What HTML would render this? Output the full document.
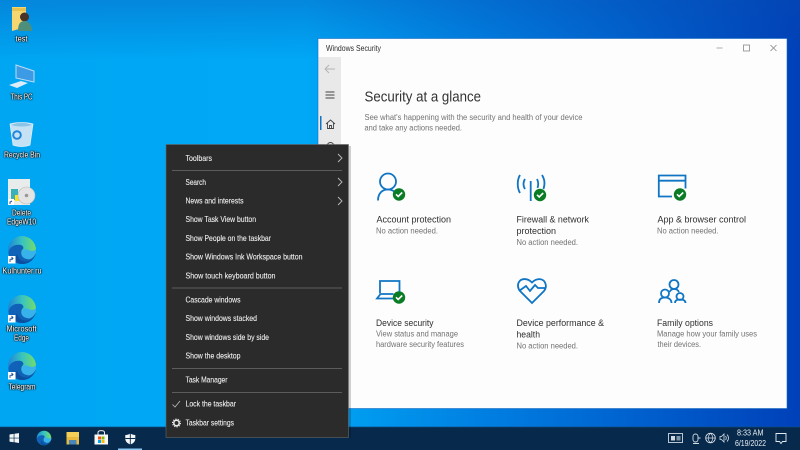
<!DOCTYPE html>
<html><head><meta charset="utf-8"><style>
html,body{margin:0;padding:0;width:800px;height:450px;overflow:hidden;background:#0070d8}
svg{display:block;filter:blur(.25px)}
text{font-family:"Liberation Sans",sans-serif}
.m text{font-size:8px;fill:#f2f2f2;stroke:#f2f2f2;stroke-width:.08}
.d text{font-size:8px;fill:#fff;text-anchor:middle}
.d{filter:drop-shadow(0 0 .7px #000) drop-shadow(0 0 .5px #000)}
.t{font-size:9px;fill:#2e2e2e}
.s{font-size:8px;fill:#727272}
.i{fill:none;stroke:#0f75c4;stroke-width:1.8}
</style></head><body>
<svg width="800" height="450" viewBox="0 0 800 450" xmlns="http://www.w3.org/2000/svg">
<defs>
<linearGradient id="bg" x1="0" y1="0" x2="1" y2="0"><stop offset="0" stop-color="#00a6f2"/><stop offset=".38" stop-color="#00a8f6"/><stop offset=".6" stop-color="#0080e2"/><stop offset="1" stop-color="#0040b8"/></linearGradient>
<linearGradient id="tp" x1="0" y1="0" x2="0" y2="1"><stop offset="0" stop-color="#0a4cb0" stop-opacity=".35"/><stop offset="1" stop-color="#0a4cb0" stop-opacity="0"/></linearGradient>
<linearGradient id="eg" x1="0" y1="0" x2="1" y2="0"><stop offset="0" stop-color="#1c86d8"/><stop offset=".5" stop-color="#38c4c0"/><stop offset="1" stop-color="#74dc6a"/></linearGradient>
<g id="edgeb"><circle cx="14" cy="14" r="14" fill="url(#eg)"/>
<path d="M.5 16C2 10 8 8 13 9c3 1 3 4 1 5-2 4 0 8 5 9 4 1 7-2 9-6-2 7-7 11-14 11C6 28 0 22 .5 16z" fill="#0f62b8"/>
<path d="M15 14c3-2 7 1 9 1 2 0 3-1 4-2v4c-2 4-5 7-9 6-5-1-7-5-4-9z" fill="#38b2ea"/>
<path d="M9 18c1 5 5 8 10 7.500 4-.5 7-4 9-8.500-2 7-7 11-14 11-2 0-4-.5-5.500-2C7 23 8 20 9 18z" fill="#0c4f9e"/></g>
<g id="edge"><use href="#edgeb"/><rect x="0" y="20" width="7.500" height="7.500" fill="#fff"/><path d="M2 26v-2.500l2.500-1M3.500 21l1.500 1.500-1.500 1.500" stroke="#1a4fa0" stroke-width=".9" fill="none"/></g>
<g id="ck"><circle r="6.200" fill="#0a7c25"/><path d="M-3-.2l2.200 2.200 4-4" stroke="#fff" stroke-width="1.600" fill="none"/></g>
</defs>

<rect width="800" height="450" fill="url(#bg)"/>
<rect width="800" height="60" fill="url(#tp)"/>

<!-- desktop icons -->
<g>
<path d="M12 7h14v20l-14 4z" fill="#f5d670"/><path d="M12 8h14v3H12z" fill="#e8c24e"/>
<circle cx="24.500" cy="17" r="4.500" fill="#4a3428"/><path d="M18 31c0-8 3-10 6.500-10S32 24 32 31z" fill="#4d8f7a"/>
<path d="M16 65l18 6v11l-18-4z" fill="#3d9be6" stroke="#bcdcf4" stroke-width="1"/><path d="M9 85l12-4 7 2-11 5z" fill="#dcecf8"/>
<path d="M10 124c7-2 16-2 23 0l-3 21c-5 2-12 2-17 0z" fill="#c4e2f4" stroke="#e4f2fa" stroke-width=".7"/><path d="M11 125c6 2 15 2 21 0-6-3-15-3-21 0z" fill="#8cc4e8"/><circle cx="17" cy="135" r="3.800" fill="none" stroke="#1f86dc" stroke-width="2"/>
<rect x="8" y="179" width="22" height="26" fill="#e8eceb"/><rect x="11" y="189" width="7" height="11" fill="#3bb0b8"/><rect x="15" y="195" width="4" height="6" fill="#ffe020"/><circle cx="26.500" cy="195.500" r="8.500" fill="#e4e4e4" stroke="#bbb" stroke-width=".6"/><circle cx="26.500" cy="195.500" r="1.800" fill="#999"/><rect x="8" y="199" width="6" height="6" fill="#fff"/><path d="M10 204v-2l2-1" stroke="#1a4fa0" fill="none"/>
<use href="#edge" x="8" y="236"/><use href="#edge" x="8" y="295"/><use href="#edge" x="8" y="352"/>
</g>
<g class="d">
<text x="21.500" y="41.500" textLength="12" lengthAdjust="spacingAndGlyphs">test</text>
<text x="21.500" y="99.500" textLength="22" lengthAdjust="spacingAndGlyphs">This PC</text>
<text x="22" y="157.500" textLength="36" lengthAdjust="spacingAndGlyphs">Recycle Bin</text>
<text x="21.500" y="215.500" textLength="19" lengthAdjust="spacingAndGlyphs">Delete</text>
<text x="21.500" y="224.500" textLength="29" lengthAdjust="spacingAndGlyphs">EdgeW10</text>
<text x="22" y="273.500" textLength="39" lengthAdjust="spacingAndGlyphs">Kulhunter.ru</text>
<text x="21.500" y="331.500" textLength="30" lengthAdjust="spacingAndGlyphs">Microsoft</text>
<text x="21.500" y="340.500" textLength="15" lengthAdjust="spacingAndGlyphs">Edge</text>
<text x="22" y="389.500" textLength="27" lengthAdjust="spacingAndGlyphs">Telegram</text>
</g>

<!-- window -->
<rect x="318" y="38.500" width="469" height="370" fill="#fdfdfd" stroke="#1c6cc4" stroke-width=".6"/>
<rect x="318.500" y="57" width="22.500" height="351" fill="#e9e9e9"/>
<text class="t" x="326" y="51" style="font-size:8px" textLength="55" lengthAdjust="spacingAndGlyphs">Windows Security</text>
<path d="M716.500 48h6" stroke="#999" stroke-width=".8"/>
<rect x="743.500" y="45" width="6" height="6" fill="none" stroke="#888" stroke-width=".8"/>
<path d="M770.500 45l6 6M776.500 45l-6 6" stroke="#888" stroke-width=".8"/>
<path d="M325 69h10M325 69l4-4M325 69l4 4" stroke="#b4b4b4" stroke-width="1" fill="none"/>
<path d="M325.500 92h9M325.500 95h9M325.500 98h9" stroke="#444" stroke-width=".9"/>
<rect x="320" y="116" width="1.500" height="14" fill="#0f75c4"/>
<path d="M326 124l4.500-4 4.500 4M327.500 123v5.500h6V123M329.500 128.500v-3h2v3" fill="none" stroke="#444" stroke-width=".9"/>
<circle cx="330.500" cy="146" r="3.500" fill="none" stroke="#444" stroke-width=".9"/>

<text x="364.500" y="101.500" style="font-size:14.500px;fill:#333" textLength="116.500" lengthAdjust="spacingAndGlyphs">Security at a glance</text>
<text class="s" x="364.500" y="120" textLength="218" lengthAdjust="spacingAndGlyphs">See what's happening with the security and health of your device</text>
<text class="s" x="364.500" y="130.500" textLength="97.500" lengthAdjust="spacingAndGlyphs">and take any actions needed.</text>

<!-- account -->
<circle class="i" cx="388" cy="181.500" r="8"/>
<path class="i" d="M378 200.500c0-7 4-11 10-11 3 0 5 1 7 2.500"/>
<use href="#ck" x="399" y="194.500"/>
<text class="t" x="376.500" y="222.500" textLength="74.500" lengthAdjust="spacingAndGlyphs">Account protection</text>
<text class="s" x="376" y="233.500" textLength="62" lengthAdjust="spacingAndGlyphs">No action needed.</text>
<!-- firewall -->
<path class="i" d="M530.700 181v20M520 175c-3 5-3 13 0 18M525 179c-2 3-2 7 0 10M537 179c1.500 3 1.500 6 .5 9M542 175c3 5 3 9 1.500 14"/>
<use href="#ck" x="540" y="195"/>
<text class="t" x="516.500" y="222.500" textLength="72.500" lengthAdjust="spacingAndGlyphs">Firewall &amp; network</text>
<text class="t" x="516.500" y="234" textLength="39.500" lengthAdjust="spacingAndGlyphs">protection</text>
<text class="s" x="516.500" y="245" textLength="61.500" lengthAdjust="spacingAndGlyphs">No action needed.</text>
<!-- app -->
<path class="i" d="M672 196.500h-13.200v-21h26.700v13M658.800 180.700h26.700"/>
<use href="#ck" x="680" y="194.500"/>
<text class="t" x="657.500" y="222.500" textLength="88.500" lengthAdjust="spacingAndGlyphs">App &amp; browser control</text>
<text class="s" x="657" y="233.500" textLength="61.500" lengthAdjust="spacingAndGlyphs">No action needed.</text>
<!-- device -->
<path class="i" d="M380 293.500v-12.500h19.500v11"/>
<path class="i" d="M380.500 294l-3.500 4.500h17M380.500 294h13"/>
<use href="#ck" x="399" y="297.500"/>
<text class="t" x="376" y="326" textLength="57.500" lengthAdjust="spacingAndGlyphs">Device security</text>
<text class="s" x="376" y="336.500" textLength="82" lengthAdjust="spacingAndGlyphs">View status and manage</text>
<text class="s" x="376" y="347" textLength="88" lengthAdjust="spacingAndGlyphs">hardware security features</text>
<!-- health -->
<path class="i" d="M532 303l-12-12c-2.500-3-2.500-7-1-9 2-3.500 8-4.500 13 .5 5-5 11-4 13 0 1.500 3 1 6-1 8.500zM519 291l7-5 4 5 5-6 3 3h7"/>
<text class="t" x="516.500" y="326" textLength="87.500" lengthAdjust="spacingAndGlyphs">Device performance &amp;</text>
<text class="t" x="516.500" y="337.500" textLength="23.500" lengthAdjust="spacingAndGlyphs">health</text>
<text class="s" x="516.500" y="348.500" textLength="61.500" lengthAdjust="spacingAndGlyphs">No action needed.</text>
<!-- family -->
<circle class="i" cx="674" cy="284.500" r="4.500"/><circle class="i" cx="665" cy="293.500" r="4"/><circle class="i" cx="680" cy="296.500" r="3.500"/>
<path class="i" d="M659 303c0-4 2.500-5.500 6-5.500s6.500 2 6.500 5.500M675 303c0-2.500 2-3.500 5-3.500s5.500 1 5.500 3.500M669.500 292c1-2 2.500-3 4.500-3s4 1 5 3"/>
<text class="t" x="657" y="326" textLength="56" lengthAdjust="spacingAndGlyphs">Family options</text>
<text class="s" x="657" y="336.500" textLength="100" lengthAdjust="spacingAndGlyphs">Manage how your family uses</text>
<text class="s" x="657.500" y="347" textLength="43.500" lengthAdjust="spacingAndGlyphs">their devices.</text>

<!-- taskbar -->
<rect y="427" width="800" height="23" fill="#06294c"/>
<rect y="426.500" width="800" height="1" fill="#0c4a80" opacity=".7"/>
<path d="M9.500 434.500l4.200-.6v3.800H9.500zM14.400 433.800l4.600-.7v4.600h-4.600zM9.500 438.400h4.200v3.800l-4.200-.6zM14.400 438.400H19v4.600l-4.600-.7z" fill="#f2f5f8"/>
<use href="#edgeb" transform="translate(36.700 430.700) scale(.52)"/>
<rect x="66.500" y="432" width="12.500" height="12.500" fill="#f4cf57"/><rect x="66.500" y="437" width="12.500" height="7.500" fill="#e8b93c"/><rect x="69" y="440" width="7.500" height="4.500" fill="#4a87b8"/>
<rect x="94.500" y="434.500" width="13.500" height="10" fill="#f8f8f8"/><path d="M98 434.500v-2c0-2.500 6.500-2.500 6.500 0v2" fill="none" stroke="#eee" stroke-width="1"/><rect x="98" y="436.500" width="3" height="3" fill="#f25022"/><rect x="101.500" y="436.500" width="3" height="3" fill="#7fba00"/><rect x="98" y="440" width="3" height="3" fill="#00a4ef"/><rect x="101.500" y="440" width="3" height="3" fill="#ffb900"/>
<path d="M130.300 433.500c1.500 1 3.500 1.500 5 1.500v3.500c0 3-2 5-5 6-3-1-5-3-5-6V435c1.500 0 3.500-.5 5-1.500z" fill="#f4f6f8"/><path d="M130.300 433.500v11M125.300 438.500h10" stroke="#06294c" stroke-width=".9"/>
<rect x="118" y="448.500" width="24" height="1.500" fill="#8cc8f4"/>

<!-- tray -->
<rect x="668.500" y="433.500" width="14" height="9" fill="none" stroke="#cfd8e0" stroke-width=".9"/><rect x="671" y="436" width="4" height="4.500" fill="#cfd8e0"/><rect x="676.500" y="436" width="4" height="4.500" fill="#7f93a6"/>
<rect x="693" y="434" width="5" height="8" rx="2.500" fill="none" stroke="#d4dce3" stroke-width=".9"/><path d="M698 438h2.500M693 443.500h6" stroke="#d4dce3" stroke-width=".9"/>
<circle cx="710.500" cy="438" r="4.800" fill="none" stroke="#dfe5ea" stroke-width=".9"/><path d="M705.700 438h9.600M710.500 433.200c-3 3-3 6.500 0 9.600M710.500 433.200c3 3 3 6.500 0 9.600" fill="none" stroke="#dfe5ea" stroke-width=".7"/>
<path d="M720 436.500h1.500l2.500-2.500v8l-2.500-2.500H720zM725.500 436c1 1 1 3 0 4M727 434.500c2 2 2 5 0 7" fill="none" stroke="#d4dce3" stroke-width=".8"/>
<text x="737" y="435.500" style="font-size:8px;fill:#e8eef2" textLength="26.500" lengthAdjust="spacingAndGlyphs">8:33 AM</text>
<text x="735" y="446" style="font-size:8px;fill:#e8eef2" textLength="31" lengthAdjust="spacingAndGlyphs">6/19/2022</text>
<path d="M776 433.500h10v8h-3.500l-1.500 2-1.500-2h-3.500z" fill="none" stroke="#e4eaef" stroke-width=".9"/>

<!-- context menu -->
<rect x="349" y="146" width="2" height="292" fill="#000" opacity=".18"/>
<rect x="166" y="144.500" width="182.500" height="293" fill="#2b2b2b" stroke="#666" stroke-width=".6"/>
<path d="M172 170.500h170M172 288h170M172 368.500h170M172 392.500h170" stroke="#5c5c5c" stroke-width=".9"/>
<g class="m">
<text x="185.500" y="161" textLength="26.500" lengthAdjust="spacingAndGlyphs">Toolbars</text>
<text x="185.500" y="185" textLength="20.500" lengthAdjust="spacingAndGlyphs">Search</text>
<text x="185.500" y="203.500" textLength="58" lengthAdjust="spacingAndGlyphs">News and interests</text>
<text x="185.500" y="222" textLength="70.500" lengthAdjust="spacingAndGlyphs">Show Task View button</text>
<text x="185.500" y="241" textLength="85.500" lengthAdjust="spacingAndGlyphs">Show People on the taskbar</text>
<text x="185.500" y="259.500" textLength="117" lengthAdjust="spacingAndGlyphs">Show Windows Ink Workspace button</text>
<text x="185.500" y="278.500" textLength="90" lengthAdjust="spacingAndGlyphs">Show touch keyboard button</text>
<text x="185.500" y="302.500" textLength="55" lengthAdjust="spacingAndGlyphs">Cascade windows</text>
<text x="185.500" y="321" textLength="71.500" lengthAdjust="spacingAndGlyphs">Show windows stacked</text>
<text x="185.500" y="340" textLength="83.500" lengthAdjust="spacingAndGlyphs">Show windows side by side</text>
<text x="185.500" y="358.500" textLength="55" lengthAdjust="spacingAndGlyphs">Show the desktop</text>
<text x="185.500" y="382.500" textLength="42" lengthAdjust="spacingAndGlyphs">Task Manager</text>
<text x="185.500" y="406.500" textLength="50.500" lengthAdjust="spacingAndGlyphs">Lock the taskbar</text>
<text x="185.500" y="425.500" textLength="48.500" lengthAdjust="spacingAndGlyphs">Taskbar settings</text>
</g>
<path d="M338 154l4 4-4 4M338 178l4 4-4 4M338 197l4 4-4 4" fill="none" stroke="#bbb" stroke-width=".9"/>
<path d="M172.500 404.500l2.500 2.500 5-6" fill="none" stroke="#bbb" stroke-width=".8"/>
<circle cx="176.500" cy="423" r="2.700" fill="none" stroke="#eee" stroke-width="1.500"/><circle cx="176.500" cy="423" r="4" fill="none" stroke="#eee" stroke-width="1" stroke-dasharray="1.200 1.300"/>
</svg>
</body></html>
